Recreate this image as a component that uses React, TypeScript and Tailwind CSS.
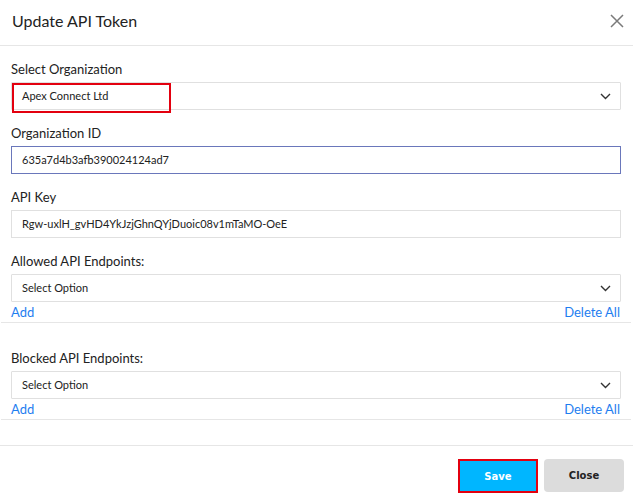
const Chevron = () => (
  <svg width="11" height="7" viewBox="0 0 11 7" className="shrink-0">
    <path d="M1 1l4.5 4.5L10 1" fill="none" stroke="#333" strokeWidth="1.4" />
  </svg>
);

const CloseIcon = () => (
  <svg width="14" height="14" viewBox="0 0 14 14" className="shrink-0">
    <path d="M1 1l12 12M13 1L1 13" fill="none" stroke="#7a7a7a" strokeWidth="1.5" />
  </svg>
);

const Label = ({ children }: { children: React.ReactNode }) => (
  <div className="h-[20px] mb-[3px] text-[13px] leading-[20px] text-[#222]">{children}</div>
);

const SelectBox = ({ value, highlight }: { value: string; highlight?: boolean }) => (
  <div className="relative h-[28px] border border-[#e0e0e0] rounded-[1px] flex items-center justify-between pl-[10px] pr-[9px] text-[11px] text-[#222]">
    <span>{value}</span>
    <Chevron />
    {highlight && (
      <div className="absolute left-0 top-0 w-[159px] h-[30px] border-2 border-[#e3000f]" />
    )}
  </div>
);

const InputBox = ({ value, focused }: { value: string; focused?: boolean }) => (
  <div
    className={`h-[28px] border flex items-center pl-[10px] text-[11px] text-[#222] ${
      focused ? 'border-[#6a77bb]' : 'border-[#e0e0e0]'
    }`}
  >
    {value}
  </div>
);

const LinkRow = () => (
  <div className="flex justify-between h-[20px] text-[13px] leading-[20px] text-[#1e7ef0]">
    <span>Add</span>
    <span className="pr-px">Delete All</span>
  </div>
);

export default function App() {
  return (
    <div className="w-[633px] h-[501px] bg-white font-['Lato','Noto_Sans',sans-serif] overflow-hidden">
      {/* Header */}
      <div className="h-[46px] border-b border-[#e6e6e6] flex items-center justify-between pl-[12px] pr-[9px]">
        <h1 className="text-[16px] text-[#222] leading-none -mt-[4px]">Update API Token</h1>
        <div className="-mt-[4px]">
          <CloseIcon />
        </div>
      </div>

      {/* Body */}
      <div className="pl-[11px] pr-[12px] pt-[13px]">
        <Label>Select Organization</Label>
        <SelectBox value="Apex Connect Ltd" highlight />

        <div className="mt-[13px]">
          <Label>Organization ID</Label>
          <InputBox value="635a7d4b3afb390024124ad7" focused />
        </div>

        <div className="mt-[13px]">
          <Label>API Key</Label>
          <InputBox value="Rgw-uxlH_gvHD4YkJzjGhnQYjDuoic08v1mTaMO-OeE" />
        </div>

        <div className="mt-[13px] border-b border-[#e6e6e6] -mx-[10px] px-[10px]">
          <Label>Allowed API Endpoints:</Label>
          <SelectBox value="Select Option" />
          <LinkRow />
        </div>

        <div className="mt-[25px] border-b border-[#e6e6e6] -mx-[10px] px-[10px]">
          <Label>Blocked API Endpoints:</Label>
          <SelectBox value="Select Option" />
          <LinkRow />
        </div>
      </div>

      {/* Footer */}
      <div className="mt-[25px] border-t border-[#e6e6e6] flex justify-end items-start gap-[6px] pr-[9px] pt-[13px] font-['DejaVu_Sans',sans-serif] text-[10px] font-bold">
        <button className="w-[80px] h-[34px] bg-[#00b6ff] text-white border-2 border-[#e3000f]">Save</button>
        <button className="w-[80px] h-[33px] bg-[#dcdcdc] text-[#222] rounded-[4px]">Close</button>
      </div>
    </div>
  );
}
